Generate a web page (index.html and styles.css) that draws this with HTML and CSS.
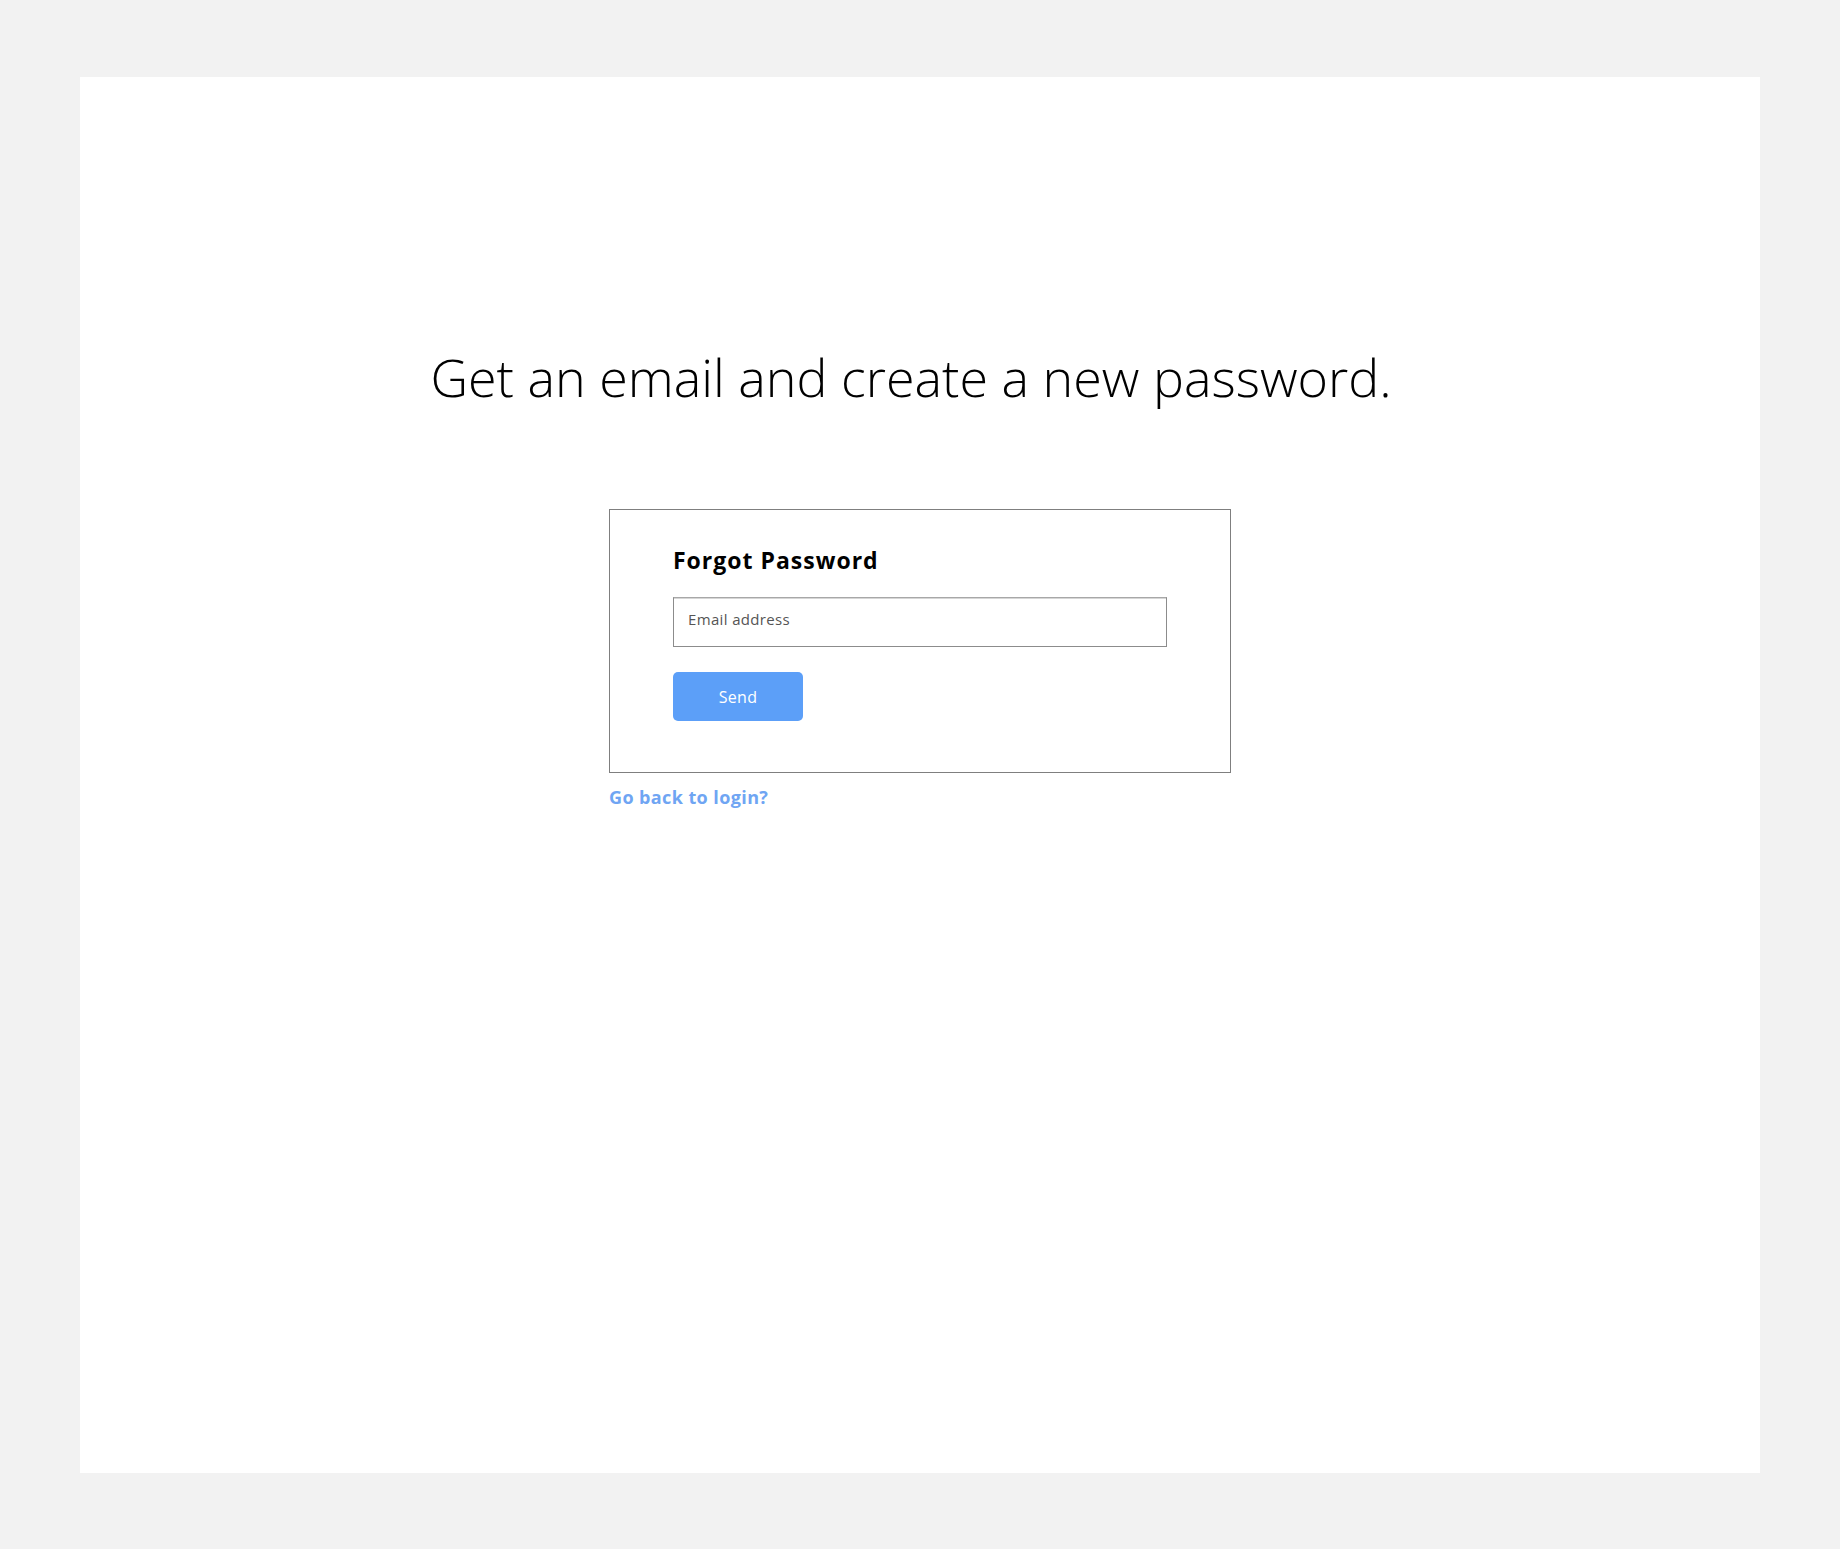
FILE: index.html
```html
<!DOCTYPE html>
<html lang="en">
<head>
<meta charset="utf-8">
<title>Forgot Password</title>
<link rel="stylesheet" href="styles.css">
</head>
<body>
<main class="panel">
  <h1 class="headline">Get an email and create a new password.</h1>
  <section class="auth">
    <form class="card">
      <h2 class="card-title">Forgot Password</h2>
      <input class="field" type="email" placeholder="Email address">
      <button class="btn" type="button">Send</button>
    </form>
    <a class="back-link" href="#">Go back to login?</a>
  </section>
</main>
</body>
</html>
```
FILE: styles.css
```css
* { box-sizing: border-box; }
html, body { margin: 0; padding: 0; }
body {
  background: #f2f2f2;
  padding: 77px 80px 76px;
  font-family: "Open Sans", "Liberation Sans", sans-serif;
  color: #000;
}
.panel {
  background: #fff;
  height: 1396px;
  padding-top: 268px;
  display: flex;
  flex-direction: column;
  align-items: center;
}
.headline {
  margin: 0 18px 0 0;
  font-size: 52px;
  line-height: 64px;
  font-weight: 300;
  color: #000;
  text-align: center;
}
.auth {
  margin-top: 100px;
  width: 622px;
  display: flex;
  flex-direction: column;
  align-items: flex-start;
}
.card {
  width: 622px;
  border: 1px solid #7f7f7f;
  padding: 36px 63px 51px;
  display: flex;
  flex-direction: column;
  align-items: flex-start;
  margin: 0;
}
.card-title {
  margin: 0;
  font-size: 23px;
  line-height: 28px;
  font-weight: 700;
  letter-spacing: 1px;
}
.field {
  margin-top: 23px;
  width: 494px;
  height: 50px;
  border: 1px solid #8c8c8c;
  border-top-color: #a8a8a8;
  box-shadow: inset 0 1px 0 #d6d6d6;
  padding: 0 14px 6px;
  font-family: inherit;
  font-size: 15px;
  letter-spacing: 0.35px;
  color: #333;
  outline: none;
  background: #fff;
}
.field::placeholder { color: #555; }
.btn {
  margin-top: 25px;
  width: 130px;
  height: 49px;
  border: none;
  border-radius: 5px;
  background: #5c9ff8;
  color: #fff;
  font-family: inherit;
  font-size: 16px;
  letter-spacing: 0.3px;
  cursor: pointer;
}
.back-link {
  margin-top: 12px;
  font-size: 18px;
  line-height: 24px;
  font-weight: 700;
  letter-spacing: 0.4px;
  color: #6fa5f3;
  text-decoration: none;
}
```
